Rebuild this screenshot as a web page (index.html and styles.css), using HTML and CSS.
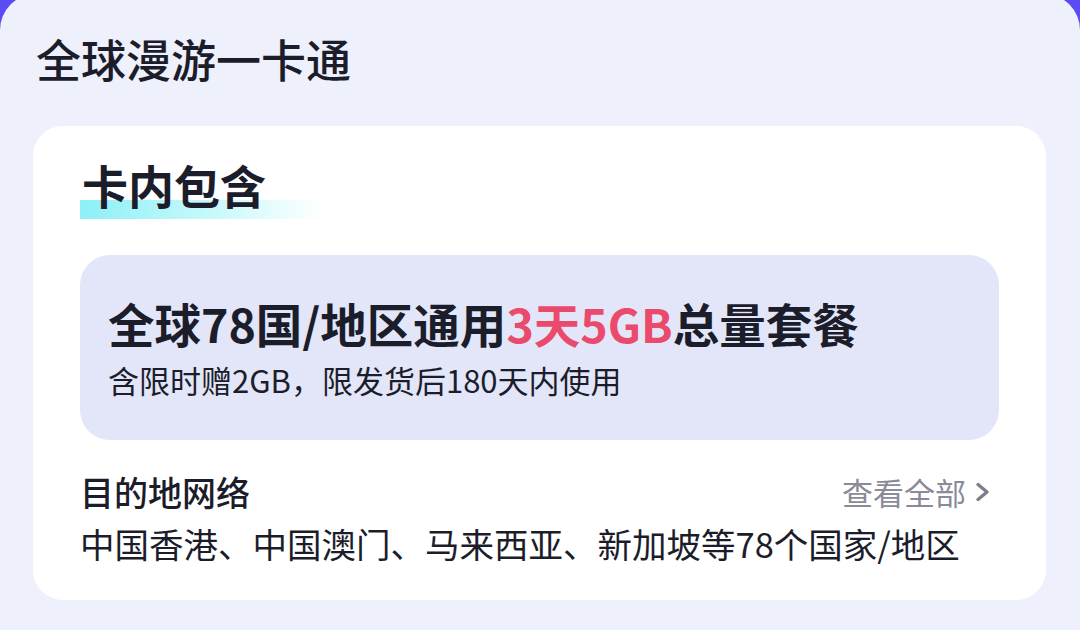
FILE: index.html
```html
<!DOCTYPE html>
<html lang="zh-CN">
<head>
    <meta charset="UTF-8">
    <meta name="viewport" content="width=device-width, initial-scale=1.0">
    <title>全球漫游一卡通</title>
    <link rel="stylesheet" href="styles.css">
</head>
<body>
    <div class="screen">
        <h1 class="page-title">全球漫游一卡通</h1>

        <div class="card">
            <h2 class="section-title"><span>卡内包含</span></h2>

            <div class="plan">
                <div class="plan-name">全球78国/地区通用<em>3天5GB</em>总量套餐</div>
                <div class="plan-note">含限时赠2GB，限发货后180天内使用</div>
            </div>

            <div class="network-head">
                <span class="network-label">目的地网络</span>
                <a class="more" href="#">查看全部
                    <svg width="15" height="20" viewBox="0 0 15 20"><path d="M3 2.5 L12 10 L3 17.5" fill="none" stroke="#7d7e8c" stroke-width="3.4" stroke-linecap="round" stroke-linejoin="round"/></svg>
                </a>
            </div>
            <div class="network-list">中国香港、中国澳门、马来西亚、新加坡等78个国家/地区</div>
        </div>
    </div>
</body>
</html>
```

FILE: styles.css
```css
body {
    margin: 0;
    height: 630px;
    background: #5a4cf4;
    font-family: "Noto Sans CJK SC", "Noto Sans", sans-serif;
    color: #1c1d2b;
    overflow: hidden;
}
.screen {
    margin-top: -6px;
    height: 636px;
    background: #eef0fc;
    border-radius: 36px 36px 0 0;
    padding: 42px 34px 0 33px;
    box-sizing: border-box;
}
.page-title {
    margin: 0 0 0 3px;
    font-size: 45px;
    line-height: 45px;
    font-weight: 500;
}
.card {
    margin-top: 45px;
    width: 1013px;
    height: 474px;
    box-sizing: border-box;
    background: #fff;
    border-radius: 30px;
    padding: 35px 47px 0 47px;
}
.section-title { margin: 0; font-size: 46px; line-height: 47px; font-weight: 600; }
.section-title span {
    display: inline-block;
    padding: 0 58px 11px 2px;
    background: linear-gradient(to right, #8cf0f6 0%, #c9f9fb 55%, rgba(255,255,255,0) 100%) no-repeat left bottom;
    background-size: 100% 19px;
}
.plan {
    margin-top: 36px;
    height: 185px;
    box-sizing: border-box;
    background: #e2e6f8;
    border-radius: 30px;
    padding: 43px 0 0 28px;
}
.plan-name { font-size: 46.5px; line-height: 50px; font-weight: 600; }
.plan-name em { font-style: normal; color: #ea4b6c; }
.plan-note { margin-top: 15px; font-size: 31px; line-height: 34px; }
.network-head {
    margin-top: 33px;
    display: flex;
    justify-content: space-between;
    align-items: center;
    padding-right: 9px;
}
.network-label { font-size: 34px; line-height: 38px; font-weight: 500; }
.more {
    display: flex;
    align-items: center;
    gap: 9px;
    font-size: 31px;
    line-height: 38px;
    color: #8a8b98;
    text-decoration: none;
}
.network-list { margin-top: 12px; font-size: 34.5px; line-height: 40px; }
```
